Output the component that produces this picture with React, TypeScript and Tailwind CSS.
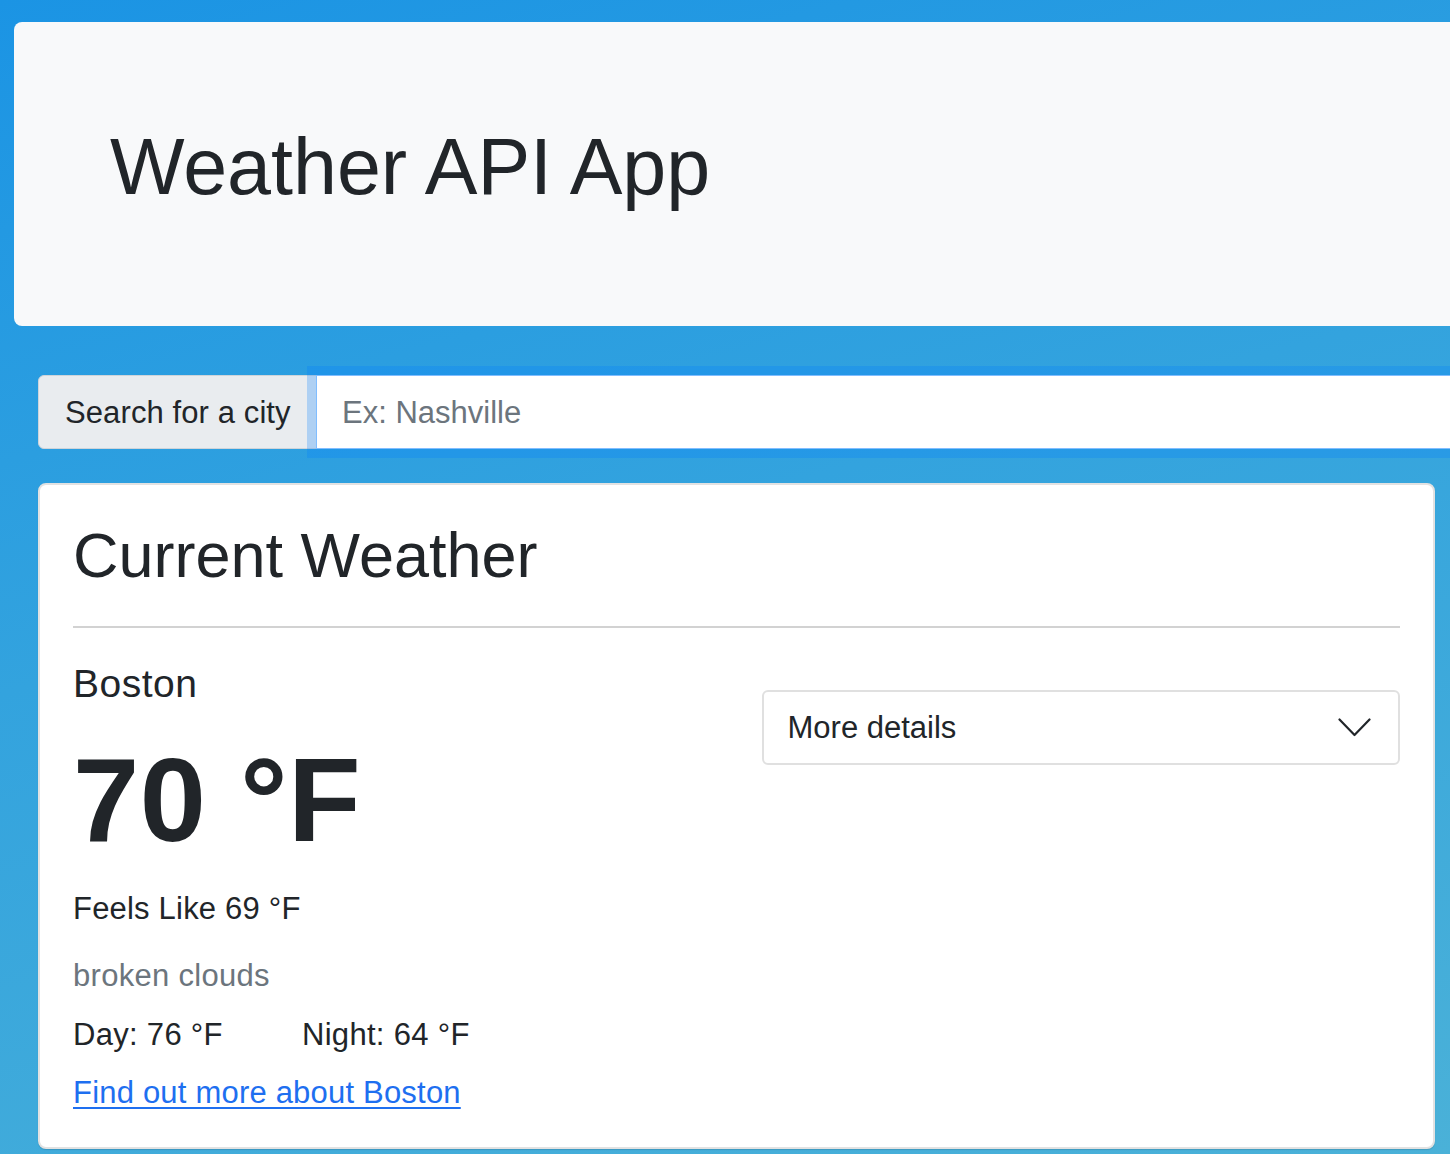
import React from "react";

export default function App() {
  return (
    <div
      className="w-full h-[1154px] overflow-hidden bg-[linear-gradient(165deg,#1b94e4_0%,#33a3de_45%,#4ab1d8_100%)] text-[#212529]"
      style={{ fontFamily: '"Liberation Sans", Arial, sans-serif' }}
    >
      <div className="pt-[22px]">
        <div className="ml-[14px] w-[1500px] h-[304px] bg-[#f8f9fa] rounded-[8px] pl-[96px] pt-[98px]">
          <h1 className="text-[79px] leading-[1.2] font-normal">Weather API App</h1>
        </div>

        <div className="mt-[49px] ml-[38px] w-[1450px] h-[74px] flex">
          <div className="h-full w-[279px] shrink-0 bg-[#e9ecef] border border-[#ced4da] rounded-l-[6px] flex items-center pl-[26px] pt-[3px] text-[31px] tracking-[0.1px]">
            Search for a city
          </div>
          <div className="relative -ml-[1px] h-full flex-1 bg-white border border-[#80bdff] shadow-[0_0_0_9px_rgba(0,123,255,0.25)] flex items-center pl-[25px] pt-[3px] text-[31px] text-[#6c757d] z-10">
            Ex: Nashville
          </div>
        </div>

        <div className="mt-[34px] ml-[38px] w-[1397px] h-[666px] bg-white border-2 border-[#e2e2e2] rounded-[8px] shadow-[0_1px_1px_rgba(0,0,0,0.12)] pt-[33px] px-[33px]">
          <h2 className="text-[63px] leading-[1.2] font-normal">Current Weather</h2>
          <div className="mt-[32px] border-t-2 border-[#d2d2d2]" />
          <div className="grid grid-cols-2 gap-[50px]">
            <div className="flex flex-col">
              <div className="mt-[33px] text-[39px] leading-[1.2] tracking-[0.5px]">Boston</div>
              <div className="mt-[33px] text-[119px] leading-none font-bold tracking-[0.5px]">70 °F</div>
              <div className="mt-[27px] text-[31px] leading-[1.5] tracking-[0.2px]">Feels Like 69 °F</div>
              <div className="mt-[20px] text-[31px] leading-[1.5] tracking-[0.3px] text-[#6c757d]">broken clouds</div>
              <div className="mt-[13px] text-[31px] leading-[1.5] tracking-[0.3px] flex">
                <span className="w-[229px]">Day: 76 °F</span>
                <span>Night: 64 °F</span>
              </div>
              <a href="#" className="mt-[11px] text-[31px] leading-[1.5] tracking-[0.2px] text-[#1e6ff0] underline underline-offset-[4px] decoration-[2px] w-fit">
                Find out more about Boston
              </a>
            </div>
            <div>
              <div className="mt-[62px] h-[75px] border-2 border-[#e0e0e0] rounded-[6px] flex items-center justify-between pl-[24px] pr-[27px]">
                <span className="text-[31px] pt-[2px]">More details</span>
                <svg width="33" height="19" viewBox="0 0 33 19" fill="none">
                  <path d="M1.5 1.5 L16.5 17 L31.5 1.5" stroke="#212529" strokeWidth="2.2" strokeLinecap="round" strokeLinejoin="round" />
                </svg>
              </div>
            </div>
          </div>
        </div>
      </div>
    </div>
  );
}
